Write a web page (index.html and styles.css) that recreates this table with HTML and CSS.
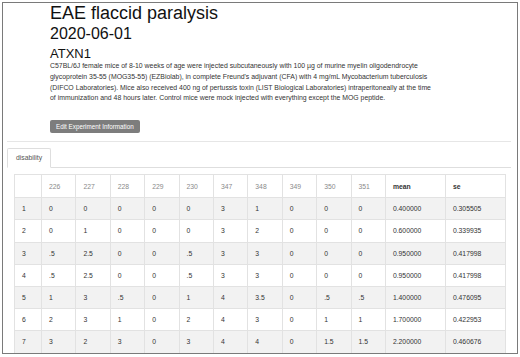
FILE: index.html
```html
<!DOCTYPE html>
<html>
<head>
<meta charset="utf-8">
<link rel="stylesheet" href="styles.css">
</head>
<body>
<div class="frame">
  <div class="head">
    <h1 class="title">EAE flaccid paralysis</h1>
    <h2 class="date">2020-06-01</h2>
    <h3 class="gene">ATXN1</h3>
    <p class="desc">C57BL/6J female mice of 8-10 weeks of age were injected subcutaneously with 100 µg of murine myelin oligodendrocyte<br>glycoprotein 35-55 (MOG35-55) (EZBiolab), in complete Freund's adjuvant (CFA) with 4 mg/mL Mycobacterium tuberculosis<br>(DIFCO Laboratories). Mice also received 400 ng of pertussis toxin (LIST Biological Laboratories) intraperitoneally at the time<br>of immunization and 48 hours later. Control mice were mock injected with everything except the MOG peptide.</p>
    <button class="btn">Edit Experiment Information</button>
  </div>
  <div class="rule"></div>
  <div class="tabs"><div class="tab">disability</div></div>
  <div class="panel">
    <table class="grid">
      <colgroup>
        <col class="c-idx"><col class="c-num"><col class="c-num"><col class="c-num"><col class="c-num"><col class="c-num"><col class="c-num"><col class="c-num"><col class="c-num"><col class="c-num"><col class="c-num"><col class="c-stat"><col class="c-stat">
      </colgroup>
      <thead>
        <tr><th></th><th>226</th><th>227</th><th>228</th><th>229</th><th>230</th><th>347</th><th>348</th><th>349</th><th>350</th><th>351</th><th class="strong">mean</th><th class="strong">se</th></tr>
      </thead>
      <tbody>
        <tr><td>1</td><td>0</td><td>0</td><td>0</td><td>0</td><td>0</td><td>3</td><td>1</td><td>0</td><td>0</td><td>0</td><td>0.400000</td><td>0.305505</td></tr>
        <tr><td>2</td><td>0</td><td>1</td><td>0</td><td>0</td><td>0</td><td>3</td><td>2</td><td>0</td><td>0</td><td>0</td><td>0.600000</td><td>0.339935</td></tr>
        <tr><td>3</td><td>.5</td><td>2.5</td><td>0</td><td>0</td><td>.5</td><td>3</td><td>3</td><td>0</td><td>0</td><td>0</td><td>0.950000</td><td>0.417998</td></tr>
        <tr><td>4</td><td>.5</td><td>2.5</td><td>0</td><td>0</td><td>.5</td><td>3</td><td>3</td><td>0</td><td>0</td><td>0</td><td>0.950000</td><td>0.417998</td></tr>
        <tr><td>5</td><td>1</td><td>3</td><td>.5</td><td>0</td><td>1</td><td>4</td><td>3.5</td><td>0</td><td>.5</td><td>.5</td><td>1.400000</td><td>0.476095</td></tr>
        <tr><td>6</td><td>2</td><td>3</td><td>1</td><td>0</td><td>2</td><td>4</td><td>3</td><td>0</td><td>1</td><td>1</td><td>1.700000</td><td>0.422953</td></tr>
        <tr><td>7</td><td>3</td><td>2</td><td>3</td><td>0</td><td>3</td><td>4</td><td>4</td><td>0</td><td>1.5</td><td>1.5</td><td>2.200000</td><td>0.460676</td></tr>
      </tbody>
    </table>
  </div>
</div>
</body>
</html>
```
FILE: styles.css
```css
* { box-sizing: border-box; }
html, body { margin: 0; padding: 0; background: #fff; }
body { padding: 2px; font-family: "Liberation Sans", Arial, sans-serif; color: #333; }
.frame {
  width: 516px;
  height: 352px;
  border: 1px solid #7a7a7a;
  overflow: hidden;
  background: #fff;
}
.head { padding-left: 47px; }
.title { margin: 0; font-size: 18px; line-height: 20px; font-weight: 400; color: #111; }
.date { margin: 1px 0 0; font-size: 16px; line-height: 19px; font-weight: 400; color: #111; }
.gene { margin: 3px 0 0; font-size: 13px; line-height: 16px; font-weight: 400; color: #111; }
.desc { margin: -1px 0 0; font-size: 6.9px; line-height: 10.8px; color: #333; }
.btn {
  display: block;
  margin: 16px 0 0 0;
  height: 13px;
  padding: 0 6px;
  border: 0;
  border-radius: 2px;
  background: #7d7d7d;
  color: #fff;
  font-family: inherit;
  font-size: 6.3px;
  line-height: 13px;
}
.rule { margin: 8px 6px 0 4px; border-top: 1px solid #e6e6e6; }
.tabs { margin: 6px 6px 0 4px; border-bottom: 1px solid #dedede; display: flex; }
.tab {
  height: 20px;
  margin-bottom: -1px;
  padding: 0 8px;
  border: 1px solid #dedede;
  border-bottom-color: #fff;
  border-radius: 2px 2px 0 0;
  background: #fff;
  font-size: 6.8px;
  line-height: 18px;
  color: #555;
}
.panel { padding: 6px 0 0 11px; }
.grid {
  border-collapse: collapse;
  table-layout: fixed;
  width: 491px;
  font-size: 6.8px;
  color: #333;
}
.c-idx { width: 27px; }
.c-num { width: 34.4px; }
.c-stat { width: 60px; }
.grid th, .grid td {
  border: 1px solid #e2e2e2;
  padding: 0 0 0 7px;
  text-align: left;
  white-space: nowrap;
}
.grid thead tr { height: 23px; }
.grid tbody tr { height: 22.2px; }
.grid th { font-weight: 400; color: #8a8a8a; }
.grid th.strong { font-weight: 700; color: #333; }
.grid tbody tr:nth-child(odd) { background: #f2f2f2; }
```
